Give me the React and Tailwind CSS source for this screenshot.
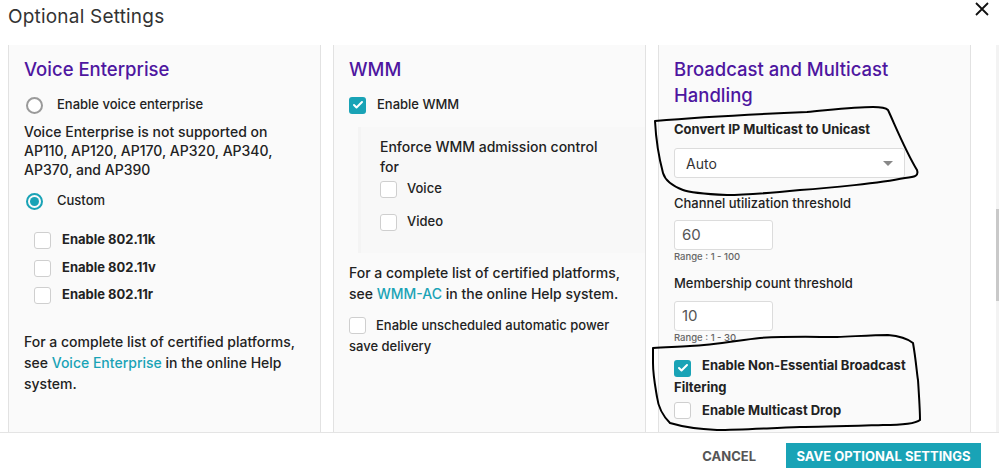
import { Check } from 'lucide-react';

const teal = 'bg-[#19a3b6]';

function Radio({ checked }) {
  return checked ? (
    <span className="w-[17px] h-[17px] rounded-full border-2 border-[#19a3b6] flex items-center justify-center shrink-0">
      <span className="w-[9px] h-[9px] rounded-full bg-[#19a3b6]" />
    </span>
  ) : (
    <span className="w-[17px] h-[17px] rounded-full border-2 border-[#9a9a9a] bg-white shrink-0" />
  );
}

function Box({ checked, className = '' }) {
  return checked ? (
    <span className={`w-[17px] h-[17px] rounded-[3px] ${teal} flex items-center justify-center shrink-0 ${className}`}>
      <Check size={12} strokeWidth={4} color="white" />
    </span>
  ) : (
    <span className={`w-[17px] h-[17px] rounded-[3px] border border-[#cfcfcf] bg-white shrink-0 ${className}`} />
  );
}

function Panel({ children }) {
  return (
    <div className="w-[313px] shrink-0 h-full bg-[#fafafa] border-x border-[#e2e2e2] pt-[11px] px-[15px]">
      {children}
    </div>
  );
}

function Heading({ children }) {
  return <h2 className="text-[18.5px] leading-[26px] text-[#4e16a0] font-medium">{children}</h2>;
}

export default function App() {
  return (
    <div className="relative w-[999px] h-[468px] overflow-hidden bg-white text-[#222]" style={{ fontFamily: 'Inter, "Noto Sans", sans-serif' }}>
      {/* header */}
      <div className="h-[45px] flex items-start justify-between pl-[8px] pr-[9px]">
        <h1 className="text-[19px] leading-[24px] mt-[5px] text-[#333] font-normal tracking-[0.2px]">Optional Settings</h1>
        <svg width="16" height="16" viewBox="0 0 16 16" className="mt-[1px]">
          <path d="M2 2 L14 14 M14 2 L2 14" stroke="#111" strokeWidth="1.8" />
        </svg>
      </div>

      {/* panels */}
      <div className="h-[387px] flex gap-[12px] pl-[8px]">
        <Panel>
          <Heading>Voice Enterprise</Heading>
          <div className="mt-[13px] h-[20px] flex items-center gap-[14px] pl-[2px]">
            <Radio />
            <span className="text-[13px] font-medium">Enable voice enterprise</span>
          </div>
          <p className="mt-[7px] text-[14px] leading-[19px] font-medium">
            Voice Enterprise is not supported on AP110, AP120, AP170, AP320, AP340, AP370, and AP390
          </p>
          <div className="mt-[12px] h-[20px] flex items-center gap-[14px] pl-[2px]">
            <Radio checked />
            <span className="text-[13px] font-medium">Custom</span>
          </div>
          <div className="pl-[10px]">
            {['Enable 802.11k', 'Enable 802.11v', 'Enable 802.11r'].map((t, i) => (
              <div key={t} className={`h-[20px] flex items-center gap-[11px] ${i === 0 ? 'mt-[19px]' : i === 1 ? 'mt-[8px]' : 'mt-[7px]'}`}>
                <Box />
                <span className="text-[13px] font-bold">{t}</span>
              </div>
            ))}
          </div>
          <p className="mt-[26px] text-[14px] leading-[21px] font-medium">
            For a complete list of certified platforms, see <span className="text-[#19a3b6]">Voice Enterprise</span> in the online Help system.
          </p>
        </Panel>

        <Panel>
          <Heading>WMM</Heading>
          <div className="mt-[13px] h-[20px] flex items-center gap-[11px]">
            <Box checked />
            <span className="text-[13px] font-medium">Enable WMM</span>
          </div>
          <div className="mt-[12px] ml-[9px] -mr-[15px] bg-[#f8f8f8] border-l-[3px] border-[#f4f4f4] pl-[19px] pt-[10px] pb-[21px]">
            <p className="text-[14px] leading-[20px] font-medium">Enforce WMM admission control<br />for</p>
            <div className="mt-[2px] h-[20px] flex items-center gap-[10px]">
              <Box />
              <span className="text-[13px] font-medium">Voice</span>
            </div>
            <div className="mt-[13px] h-[20px] flex items-center gap-[10px]">
              <Box />
              <span className="text-[13px] font-medium">Video</span>
            </div>
          </div>
          <p className="mt-[9px] text-[14px] leading-[21px] font-medium">
            For a complete list of certified platforms, see <span className="text-[#19a3b6]">WMM-AC</span> in the online Help system.
          </p>
          <p className="mt-[11px] text-[13px] leading-[21px] font-medium">
            <Box className="inline-block align-[-4px] mr-[10px]" />
            Enable unscheduled automatic power save delivery
          </p>
        </Panel>

        <Panel>
          <Heading>Broadcast and Multicast Handling</Heading>
          <div className="mt-[12px] text-[13px] leading-[18px] font-bold">Convert IP Multicast to Unicast</div>
          <div className="mt-[10px] w-[231px] h-[30px] bg-white border border-[#dcdcdc] rounded-[3px] flex items-center justify-between pl-[11px] pr-[11px]">
            <span className="text-[14px] text-[#333]">Auto</span>
            <span className="w-0 h-0 border-x-[5px] border-x-transparent border-t-[5px] border-t-[#888]" />
          </div>
          <div className="mt-[16px] text-[13px] leading-[18px] font-medium">Channel utilization threshold</div>
          <div className="mt-[8px] w-[99px] h-[30px] bg-white border border-[#dcdcdc] rounded-[3px] flex items-center pl-[7px] text-[15px] text-[#555]">60</div>
          <div className="text-[9.5px] leading-[14px] text-[#666] font-medium">Range : 1 - 100</div>
          <div className="mt-[10px] text-[13px] leading-[18px] font-medium">Membership count threshold</div>
          <div className="mt-[9px] w-[99px] h-[30px] bg-white border border-[#dcdcdc] rounded-[3px] flex items-center pl-[7px] text-[15px] text-[#555]">10</div>
          <div className="text-[9.5px] leading-[14px] text-[#666] font-medium">Range : 1 - 30</div>
          <p className="mt-[10px] text-[13px] leading-[21px] font-bold">
            <Box checked className="inline-flex align-[-4px] mr-[11px]" />
            Enable Non-Essential Broadcast Filtering
          </p>
          <div className="mt-[3px] h-[20px] flex items-center gap-[11px]">
            <Box />
            <span className="text-[13px] font-bold">Enable Multicast Drop</span>
          </div>
        </Panel>
      </div>

      {/* footer */}
      <div className="h-[36px] border-t border-[#e4e4e4] flex items-start justify-end pr-[18px] gap-[30px] bg-white relative z-10">
        <span className="mt-[16px] text-[13px] leading-[14px] font-bold text-[#555]">CANCEL</span>
        <div className={`mt-[10px] w-[195px] h-[32px] ${teal} text-white text-[13px] leading-[14px] font-bold flex justify-center pt-[6px]`}>
          SAVE OPTIONAL SETTINGS
        </div>
      </div>

      {/* scrollbar */}
      <div className="absolute right-0 top-[45px] w-[3px] h-[387px] bg-[#f3f3f3]">
        <div className="mt-[164px] h-[92px] bg-[#c9c9c9]" />
      </div>

      {/* hand-drawn annotations */}
      <svg className="absolute inset-0 pointer-events-none" width="999" height="468" viewBox="0 0 999 468" fill="none">
        <path
          d="M655 121 C690 118 760 114 807 112 C830 110 855 107 873 107 C880 107 886 108 888 110 C895 125 905 150 917 170 C919 176 915 177 905 178 C880 183 830 188 800 190 C770 193 745 195 727 195 C705 194 690 193 683 190 C670 185 665 180 663 173 C659 158 656 140 655 121"
          stroke="#000" strokeWidth="2" strokeLinecap="round"
        />
        <path
          d="M653 348 C665 347 675 347 690 346 C715 345 740 340 760 338 C790 336 815 337 837 337 C860 336 875 335 888 335 C900 336 908 339 913 343 C916 360 917 375 918 380 C919 395 920 410 920 420 C915 424 900 425 883 425 C850 426 820 427 800 427 C770 428 740 430 717 430 C695 429 680 426 670 423 C662 415 658 405 657 397 C655 385 653 375 653 363 C653 355 653 351 653 348"
          stroke="#000" strokeWidth="2" strokeLinecap="round"
        />
      </svg>
    </div>
  );
}
